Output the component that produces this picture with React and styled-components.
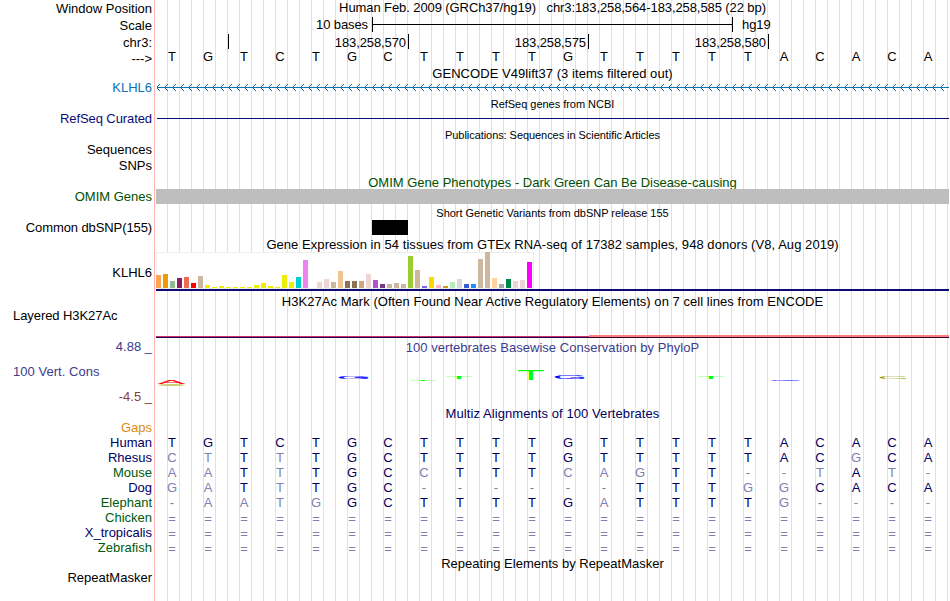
import styled, { createGlobalStyle } from "styled-components";

const colors = {
  grid: "#dcdcff",
  divider: "#ffb4b4",
  black: "#000",
  gene: "#0c72b0",
  navy: "#0c0c78",
  green: "#005000",
  cons: "#3c3c8c",
  negative: "#8c3c3c",
  species: "#000064",
  speciesAlt: "#005a0a",
  mismatch: "#8080b2",
  gaps: "#e08a10",
};

const GlobalStyle = createGlobalStyle`
  body {
    margin: 0;
    background: #fff;
    overflow: hidden;
  }
`;

const Page = styled.main`
  width: 950px;
  height: 601px;
  overflow: hidden;
  font-family: "Liberation Sans", Arial, sans-serif;
  font-size: 13px;
  line-height: 15px;
  color: ${colors.black};
  white-space: pre;
`;

const Row = styled.section`
  display: grid;
  grid-template-columns: 155px 793px;
  column-gap: 1px;
  height: ${(p) => p.$h}px;
`;

const Label = styled.div`
  box-sizing: border-box;
  border-right: 1px solid ${colors.divider};
  padding: ${(p) => p.$drop ?? 0}px 2px 0 13px;
  text-align: ${(p) => (p.$left ? "left" : "right")};
  letter-spacing: ${(p) => p.$spacing ?? 0}px;
  color: ${(p) => p.$color ?? colors.black};
`;

const Track = styled.div`
  box-sizing: border-box;
  height: 100%;
  min-width: 0;
  padding-top: ${(p) => p.$drop ?? 0}px;
  background: repeating-linear-gradient(
    to right,
    transparent 0 11px,
    ${colors.grid} 11px 12px
  );
`;

const Title = styled.div`
  text-align: center;
  font-size: ${(p) => (p.$small ? 11 : 13)}px;
  letter-spacing: ${(p) => p.$spacing ?? 0}px;
  color: ${(p) => p.$color ?? colors.black};
`;

const ScaleLine = styled.div`
  display: flex;
  letter-spacing: -0.1px;
`;

const ScaleText = styled.span`
  width: ${(p) => p.$w}px;
  text-align: right;
`;

const ScaleBar = styled.div`
  box-sizing: border-box;
  width: 361px;
  height: 15px;
  margin: 0 9px 0 4px;
  border: solid ${colors.black};
  border-width: 0 1px;
  background: linear-gradient(${colors.black}, ${colors.black}) 0 7px / 100% 1px
    no-repeat;
`;

const Ruler = styled.div`
  display: flex;
`;

const Tick = styled.div`
  box-sizing: border-box;
  width: ${(p) => p.$w}px;
  height: 15px;
  padding: 1px 2px 0 0;
  border-right: 1px solid ${colors.black};
  text-align: right;
  letter-spacing: -0.1px;
`;

const Bases = styled.div`
  display: grid;
  grid-template-columns: repeat(22, 32px);
  column-gap: 4px;
`;

const Base = styled.span`
  text-align: center;
  color: ${(p) => p.$color};
`;

const Drawing = styled.svg`
  display: block;
`;

const GeneLine = styled.div`
  height: 1px;
  margin: 7px 0 0 1px;
  background: ${colors.navy};
`;

const OmimBar = styled.div`
  height: 15px;
  background: #bebebe;
`;

const Variant = styled.div`
  width: 36px;
  height: 15px;
  margin-left: 216px;
  background: ${colors.black};
`;

const Expression = styled.div`
  box-sizing: border-box;
  display: flex;
  align-items: flex-end;
  gap: 2px;
  width: 378px;
  height: 37px;
  padding-bottom: 1px;
  background: #fff;
  box-shadow: inset 0 0 0 1px #eee;
`;

const Tissue = styled.div`
  width: 5px;
  background: ${(p) => p.$color};
`;

const Baseline = styled.div`
  height: 2px;
  background: ${colors.navy};
`;

const Signal = styled.div`
  display: grid;
  grid-template-columns: 433px 1fr;
  align-items: end;
  height: 3px;
  margin-top: 27px;
`;

const SignalPart = styled.div`
  box-sizing: border-box;
  height: ${(p) => p.$h}px;
  background: ${(p) => p.$color};
  border-bottom: 1px solid ${(p) => p.$edge};
`;

const HUMAN = "TGTCTGCTTTTGTTTTTACACA";
const GAP_ROW = "=".repeat(22);

const alignments = [
  { name: "Human", bases: HUMAN },
  { name: "Rhesus", bases: "CTTTTGCTTTTGTTTTTACGCA" },
  { name: "Mouse", bases: "AATTTGCCTTTCAGTT--TAT-", alt: true },
  { name: "Dog", bases: "GATTTGC------TTTGGCACA" },
  { name: "Elephant", bases: "-AATGGCTTTTGATTTTG----", alt: true },
  { name: "Chicken", bases: GAP_ROW, alt: true, drop: 1 },
  { name: "X_tropicalis", bases: GAP_ROW, drop: 1 },
  { name: "Zebrafish", bases: GAP_ROW, alt: true, drop: 1, h: 16 },
];

const tissues = [
  [13, "#ffa54f"], [14, "#ee9a00"], [7, "#8fbc8f"], [10, "#8b1c62"],
  [11, "#ee6a50"], [5, "#ff0000"], [12, "#cdb79e"], [3, "#eeee00"],
  [1, "#eeee00"], [2, "#eeee00"], [1, "#eeee00"], [1, "#eeee00"],
  [1, "#eeee00"], [1, "#eeee00"], [3, "#eeee00"], [5, "#eeee00"],
  [2, "#eeee00"], [1, "#eeee00"], [13, "#eeee00"], [6, "#eeee00"],
  [11, "#00cdcd"], [28, "#ee82ee"], [0, "#9ac0cd"], [6, "#eed5d2"],
  [9, "#eed5d2"], [6, "#cdb79e"], [17, "#eec591"], [7, "#8b7355"],
  [7, "#8b7355"], [7, "#cdaa7d"], [14, "#eed5d2"], [8, "#b452cd"],
  [4, "#7a378b"], [4, "#cdb79e"], [5, "#cdb79e"], [4, "#cdb79e"],
  [32, "#9acd32"], [18, "#cdb79e"], [2, "#7a67ee"], [11, "#ffd700"],
  [3, "#ffb6c1"], [2, "#cd9b1d"], [6, "#b4eeb4"], [9, "#d9d9d9"],
  [4, "#3a5fcd"], [4, "#1e90ff"], [29, "#cdb79e"], [36, "#cdb79e"],
  [10, "#ffd39b"], [4, "#a6a6a6"], [9, "#008b45"], [7, "#eed5d2"],
  [8, "#eed5d2"], [26, "#ff00ff"],
];

// x and y are the top left corner of each stretched letter in the track
const logo = [
  { base: "A", x: 2, y: 26, w: 27, h: 4, color: "#ff0000", bold: true },
  { base: "G", x: 183, y: 22, w: 30, h: 3, color: "#0000ff", bold: true },
  { base: "T", x: 254, y: 26, w: 26, h: 1, color: "#00ff00" },
  { base: "T", x: 290, y: 22, w: 26, h: 3, color: "#00ff00" },
  { base: "T", x: 362, y: 16, w: 26, h: 10, color: "#00ff00" },
  { base: "G", x: 399, y: 21, w: 30, h: 4, color: "#0000ff", bold: true },
  { base: "T", x: 542, y: 23, w: 26, h: 2, color: "#00ff00" },
  { base: "G", x: 615, y: 26, w: 30, h: 1, color: "#0000ff" },
  { base: "C", x: 723, y: 22, w: 28, h: 3, color: "#a0a000" },
];

const glyphWidth = { A: 0.66, C: 0.64, G: 0.68, T: 0.57 };

function LogoLetter({ base, x, y, w, h, color, bold }) {
  const sx = w / (glyphWidth[base] * 20);
  const sy = h / (0.69 * 20);
  return (
    <text
      transform={`translate(${x + w / 2} ${y + h}) scale(${sx} ${sy})`}
      textAnchor="middle"
      fontSize="20"
      fill={color}
      stroke={bold ? color : "none"}
      strokeWidth="0.4"
      vectorEffect="non-scaling-stroke"
    >
      {base}
    </text>
  );
}

function TitleRow({ h, small, color, spacing, children }) {
  return (
    <Row $h={h}>
      <Label />
      <Track $drop={small ? 1 : 0}>
        <Title $small={small} $color={color} $spacing={spacing}>
          {children}
        </Title>
      </Track>
    </Row>
  );
}

function Sequence({ bases, colorOf }) {
  return (
    <Bases>
      {[...bases].map((base, i) => (
        <Base key={i} $color={colorOf(base, i)}>
          {base}
        </Base>
      ))}
    </Bases>
  );
}

// one pixel per step, from the tip out along both arms
function arrowPath(x) {
  return [-3, -2, -1, 1, 2, 3]
    .map((d) => `M${x + Math.abs(d)} ${7 + d}h1v1h-1z`)
    .join("");
}

function Intron() {
  const arrows = Array.from({ length: 99 }, (_, i) => i * 8);
  return (
    <Drawing width="793" height="14" shapeRendering="crispEdges">
      <rect x="1" y="7" width="792" height="1" fill={colors.gene} />
      <path d={arrows.map(arrowPath).join("")} fill={colors.gene} />
    </Drawing>
  );
}

export default function App() {
  return (
    <Page>
      <GlobalStyle />
      <Row $h={17}>
        <Label $drop={1}>Window Position</Label>
        <Track>
          <Title $spacing={-0.09}>
            {"Human Feb. 2009 (GRCh37/hg19)   chr3:183,258,564-183,258,585 (22 bp)"}
          </Title>
        </Track>
      </Row>
      <Row $h={17}>
        <Label $drop={1}>Scale</Label>
        <Track>
          <ScaleLine>
            <ScaleText $w={212}>10 bases</ScaleText>
            <ScaleBar />
            <span>hg19</span>
          </ScaleLine>
        </Track>
      </Row>
      <Row $h={15}>
        <Label $drop={1}>chr3:</Label>
        <Track>
          <Ruler>
            <Tick $w={73} />
            <Tick $w={180}>183,258,570</Tick>
            <Tick $w={180}>183,258,575</Tick>
            <Tick $w={180}>183,258,580</Tick>
          </Ruler>
        </Track>
      </Row>
      <Row $h={17}>
        <Label $drop={2}>{"--->"}</Label>
        <Track>
          <Sequence bases={HUMAN} colorOf={() => colors.black} />
        </Track>
      </Row>
      <TitleRow h={14} spacing={0.05}>
        GENCODE V49lift37 (3 items filtered out)
      </TitleRow>
      <Row $h={16}>
        <Label $color={colors.gene}>KLHL6</Label>
        <Track>
          <Intron />
        </Track>
      </Row>
      <TitleRow h={15} small spacing={-0.03}>
        RefSeq genes from NCBI
      </TitleRow>
      <Row $h={16}>
        <Label $color={colors.navy} $spacing={-0.09}>
          RefSeq Curated
        </Label>
        <Track>
          <GeneLine />
        </Track>
      </Row>
      <TitleRow h={15} small spacing={-0.06}>
        Publications: Sequences in Scientific Articles
      </TitleRow>
      <Row $h={16}>
        <Label>Sequences</Label>
        <Track />
      </Row>
      <Row $h={17}>
        <Label>SNPs</Label>
        <Track />
      </Row>
      <TitleRow h={14} color={colors.green}>
        OMIM Gene Phenotypes - Dark Green Can Be Disease-causing
      </TitleRow>
      <Row $h={16}>
        <Label $color={colors.green}>OMIM Genes</Label>
        <Track>
          <OmimBar />
        </Track>
      </Row>
      <TitleRow h={15} small spacing={-0.02}>
        Short Genetic Variants from dbSNP release 155
      </TitleRow>
      <Row $h={17}>
        <Label $spacing={-0.1}>Common dbSNP(155)</Label>
        <Track>
          <Variant />
        </Track>
      </Row>
      <TitleRow h={15} spacing={0.055}>
        Gene Expression in 54 tissues from GTEx RNA-seq of 17382 samples, 948
        donors (V8, Aug 2019)
      </TitleRow>
      <Row $h={42}>
        <Label $drop={13}>KLHL6</Label>
        <Track>
          <Expression>
            {tissues.map(([value, color], i) => (
              <Tissue key={i} $color={color} style={{ height: value }} />
            ))}
          </Expression>
          <Baseline />
        </Track>
      </Row>
      <TitleRow h={14} spacing={0.045}>
        H3K27Ac Mark (Often Found Near Active Regulatory Elements) on 7 cell
        lines from ENCODE
      </TitleRow>
      <Row $h={31}>
        <Label $left $spacing={-0.07}>
          Layered H3K27Ac
        </Label>
        <Track>
          <Signal>
            <SignalPart $h={2} $color="#c83264" $edge="#280050" />
            <SignalPart $h={3} $color="#ff8080" $edge="#320028" />
          </Signal>
        </Track>
      </Row>
      <Row $h={15}>
        <Label $color={colors.cons}>4.88 _</Label>
        <Track $drop={1}>
          <Title $color={colors.cons} $spacing={0.03}>
            100 vertebrates Basewise Conservation by PhyloP
          </Title>
        </Track>
      </Row>
      <Row $h={35}>
        <Label $left $drop={10} $color={colors.cons} $spacing={0.04}>
          100 Vert. Cons
        </Label>
        <Track>
          <Drawing width="793" height="35">
            <ellipse cx="15.5" cy="31" rx="13.5" ry="0.9" fill="#cccc70" />
            {logo.map((letter, i) => (
              <LogoLetter key={i} {...letter} />
            ))}
          </Drawing>
        </Track>
      </Row>
      <Row $h={17}>
        <Label $color={colors.negative}>-4.5 _</Label>
        <Track />
      </Row>
      <TitleRow h={14} color={colors.species} spacing={0.08}>
        Multiz Alignments of 100 Vertebrates
      </TitleRow>
      <Row $h={15}>
        <Label $color={colors.gaps}>Gaps</Label>
        <Track />
      </Row>
      {alignments.map(({ name, bases, alt, drop, h = 15 }) => (
        <Row key={name} $h={h}>
          <Label $color={alt ? colors.speciesAlt : colors.species}>{name}</Label>
          <Track $drop={drop}>
            <Sequence
              bases={bases}
              colorOf={(base, i) =>
                base === HUMAN[i] ? colors.species : colors.mismatch
              }
            />
          </Track>
        </Row>
      ))}
      <TitleRow h={14}>Repeating Elements by RepeatMasker</TitleRow>
      <Row $h={31}>
        <Label>RepeatMasker</Label>
        <Track />
      </Row>
    </Page>
  );
}
